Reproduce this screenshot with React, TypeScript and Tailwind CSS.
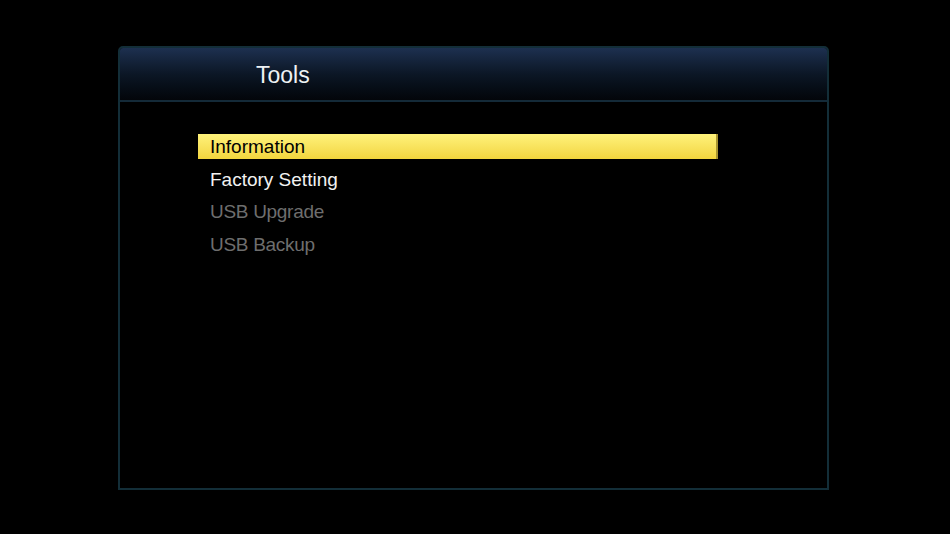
import React from "react";

export default function App() {
  const items = [
    { label: "Information", state: "active" },
    { label: "Factory Setting", state: "normal" },
    { label: "USB Upgrade", state: "disabled" },
    { label: "USB Backup", state: "disabled" },
  ];
  return (
    <div
      className="w-[950px] h-[534px] bg-black overflow-hidden pt-[46px] pl-[118px]"
      style={{ fontFamily: '"Liberation Sans", Arial, sans-serif' }}
    >
      <div className="w-[711px] h-[444px] border-2 border-[#132e38] rounded-t-[5px] flex flex-col">
        <div className="h-[54px] bg-gradient-to-b from-[#1d3050] via-[#0c1726] to-[#03060a] border-b-2 border-[#142a38] flex items-center pl-[136px] rounded-t-[3px]">
          <span className="text-[23px] text-[#eef2f4] leading-none mt-[2px]">Tools</span>
        </div>
        <div className="flex flex-col gap-[7.6px] pl-[78px] pt-[32px]">
          {items.map((it) => (
            <div
              key={it.label}
              className={
                it.state === "active"
                  ? "w-[520px] h-[25px] flex items-center pl-[12px] bg-gradient-to-b from-[#fff27a] to-[#f2d53c] border-r-2 border-[#a89430] text-black text-[19px]"
                  : it.state === "normal"
                  ? "w-[520px] h-[25px] flex items-center pl-[12px] text-[#f2f2f2] text-[19px]"
                  : "w-[520px] h-[25px] flex items-center pl-[12px] text-[#6e6e6e] text-[19px] tracking-[-0.3px]"
              }
            >
              <span className="leading-none">{it.label}</span>
            </div>
          ))}
        </div>
      </div>
    </div>
  );
}
